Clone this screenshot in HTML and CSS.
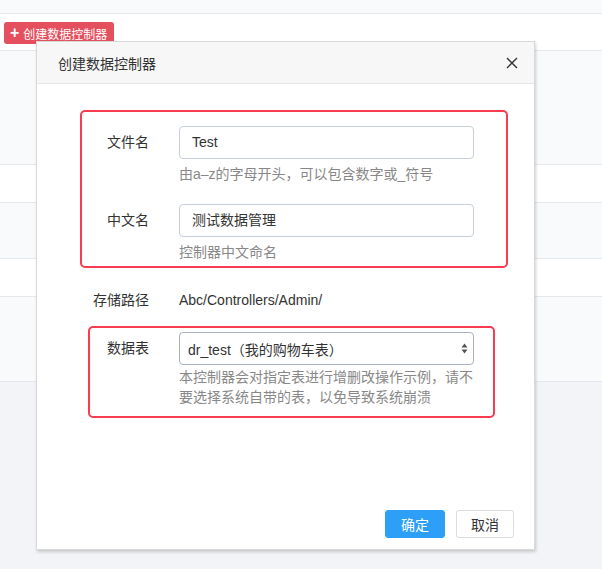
FILE: index.html
```html
<!DOCTYPE html>
<html lang="zh-CN">
<head>
    <meta charset="UTF-8">
    <meta name="viewport" content="width=device-width, initial-scale=1.0">
    <title>创建数据控制器</title>
    <link rel="stylesheet" href="styles.css">
</head>
<body>
    <!-- page behind the dialog -->
    <div class="list">
        <div class="row row-top"></div>
        <div class="row row-tool">
            <button class="add-button"><span class="plus">+</span>创建数据控制器</button>
        </div>
        <div class="row row-light h113"></div>
        <div class="row h37"></div>
        <div class="row row-light h55"></div>
        <div class="row h37"></div>
        <div class="row row-light h84"></div>
    </div>

    <!-- dialog -->
    <div class="modal">
        <div class="modal-header">
            <span class="modal-title">创建数据控制器</span>
            <svg class="close" width="12" height="12" viewBox="0 0 12 12">
                <path d="M1 1L11 11M11 1L1 11" stroke="#333" stroke-width="1.4" fill="none"/>
            </svg>
        </div>

        <div class="modal-body">
            <div class="mark mark-one">
                <div class="field">
                    <label class="label">文件名</label>
                    <div class="control">
                        <div class="input">Test</div>
                        <div class="help">由a–z的字母开头，可以包含数字或_符号</div>
                    </div>
                </div>
                <div class="field field-next">
                    <label class="label">中文名</label>
                    <div class="control">
                        <div class="input">测试数据管理</div>
                        <div class="help">控制器中文命名</div>
                    </div>
                </div>
            </div>

            <div class="field field-plain">
                <label class="label">存储路径</label>
                <div class="control">
                    <div class="value">Abc/Controllers/Admin/</div>
                </div>
            </div>

            <div class="mark mark-two">
                <div class="field">
                    <label class="label">数据表</label>
                    <div class="control">
                        <div class="select">
                            <span>dr_test（我的购物车表）</span>
                            <svg width="7" height="11" viewBox="0 0 7 11">
                                <path d="M3.5 0.5L6.5 4.5H0.5Z" fill="#555"/>
                                <path d="M3.5 10.5L6.5 6.5H0.5Z" fill="#555"/>
                            </svg>
                        </div>
                        <div class="help help-tight">本控制器会对指定表进行增删改操作示例，请不要选择系统自带的表，以免导致系统崩溃</div>
                    </div>
                </div>
            </div>
        </div>

        <div class="modal-footer">
            <button class="btn btn-primary">确定</button>
            <button class="btn">取消</button>
        </div>
    </div>
</body>
</html>
```

FILE: styles.css
```css
body {
    font-family: "Liberation Sans", "Noto Sans CJK SC", sans-serif;
    font-size: 14px;
    color: #333;
    background: #f3f4f7;
    margin: 0;
    padding: 0;
}

/* background list */
.list {
    width: 100%;
}

.row {
    background: #ffffff;
    border-bottom: 1px solid #e4e7ec;
    height: 37px;
}

.row-light {
    background: #f9fafc;
}

.row-top {
    background: #f9fafc;
    height: 13px;
}

.row-tool {
    box-sizing: border-box;
    height: 37px;
    padding: 8px 0 0 4px;
}

.h113 { height: 113px; }
.h37 { height: 37px; }
.h55 { height: 55px; }
.h84 { height: 84px; }

.add-button {
    display: flex;
    align-items: center;
    height: 22px;
    width: 110px;
    padding: 0 0 0 6px;
    border: none;
    border-radius: 3px;
    background: #e5505e;
    color: #fff;
    font-family: "Liberation Sans", "Noto Sans CJK SC", sans-serif;
    font-size: 12px;
}

.plus {
    font-size: 16px;
    font-weight: bold;
    margin-right: 4px;
    line-height: 1;
}

/* dialog */
.modal {
    position: absolute;
    left: 36px;
    top: 41px;
    width: 499px;
    height: 509px;
    box-sizing: border-box;
    background: #fff;
    border: 1px solid #d9d9d9;
    box-shadow: 1px 2px 3px rgba(0, 0, 0, 0.18);
    display: flex;
    flex-direction: column;
}

.modal-header {
    height: 41px;
    background: #f7f7f7;
    border-bottom: 1px solid #e6e6e6;
    display: flex;
    align-items: center;
    justify-content: space-between;
    padding: 0 16px 0 21px;
}

.modal-title {
    font-size: 14px;
    color: #333;
}

.modal-body {
    padding: 26px 0 0 56px;
}

.mark {
    border: 2px solid #fb3b4f;
    border-radius: 5px;
}

.mark-one {
    margin-left: -13px;
    padding: 14px 0 4px 11px;
    width: 413px;
}

.mark-two {
    margin-left: -5px;
    width: 400px;
    padding: 4px 0 9px 3px;
    margin-top: 16px;
}

.field {
    display: flex;
    align-items: flex-start;
}

.field-next {
    margin-top: 20px;
}

.field-plain {
    margin-top: 22px;
}

.label {
    width: 56px;
    text-align: right;
    margin-right: 30px;
    line-height: 33px;
    white-space: nowrap;
}

.field-plain .label,
.field-plain .value {
    line-height: 20px;
}

.control {
    width: 295px;
}

.input {
    box-sizing: border-box;
    height: 33px;
    border: 1px solid #c7cfdb;
    border-radius: 4px;
    padding: 0 12px;
    line-height: 31px;
    color: #333;
}

.select {
    box-sizing: border-box;
    height: 33px;
    border: 1px solid #a7b1c2;
    border-radius: 4px;
    padding: 0 5px 0 8px;
    display: flex;
    align-items: center;
    justify-content: space-between;
}

.help {
    color: #888;
    line-height: 20px;
    margin-top: 5px;
}

.help-tight {
    margin-top: 2px;
}

.modal-footer {
    margin-top: auto;
    display: flex;
    justify-content: flex-end;
    gap: 11px;
    padding: 0 20px 11px 0;
}

.btn {
    height: 28px;
    width: 58px;
    border: 1px solid #dcdcdc;
    border-radius: 3px;
    background: #fff;
    color: #333;
    font-family: "Liberation Sans", "Noto Sans CJK SC", sans-serif;
    font-size: 14px;
    padding: 0;
}

.btn-primary {
    width: 60px;
    background: #2d9ff6;
    border-color: #2d9ff6;
    color: #fff;
}
```
